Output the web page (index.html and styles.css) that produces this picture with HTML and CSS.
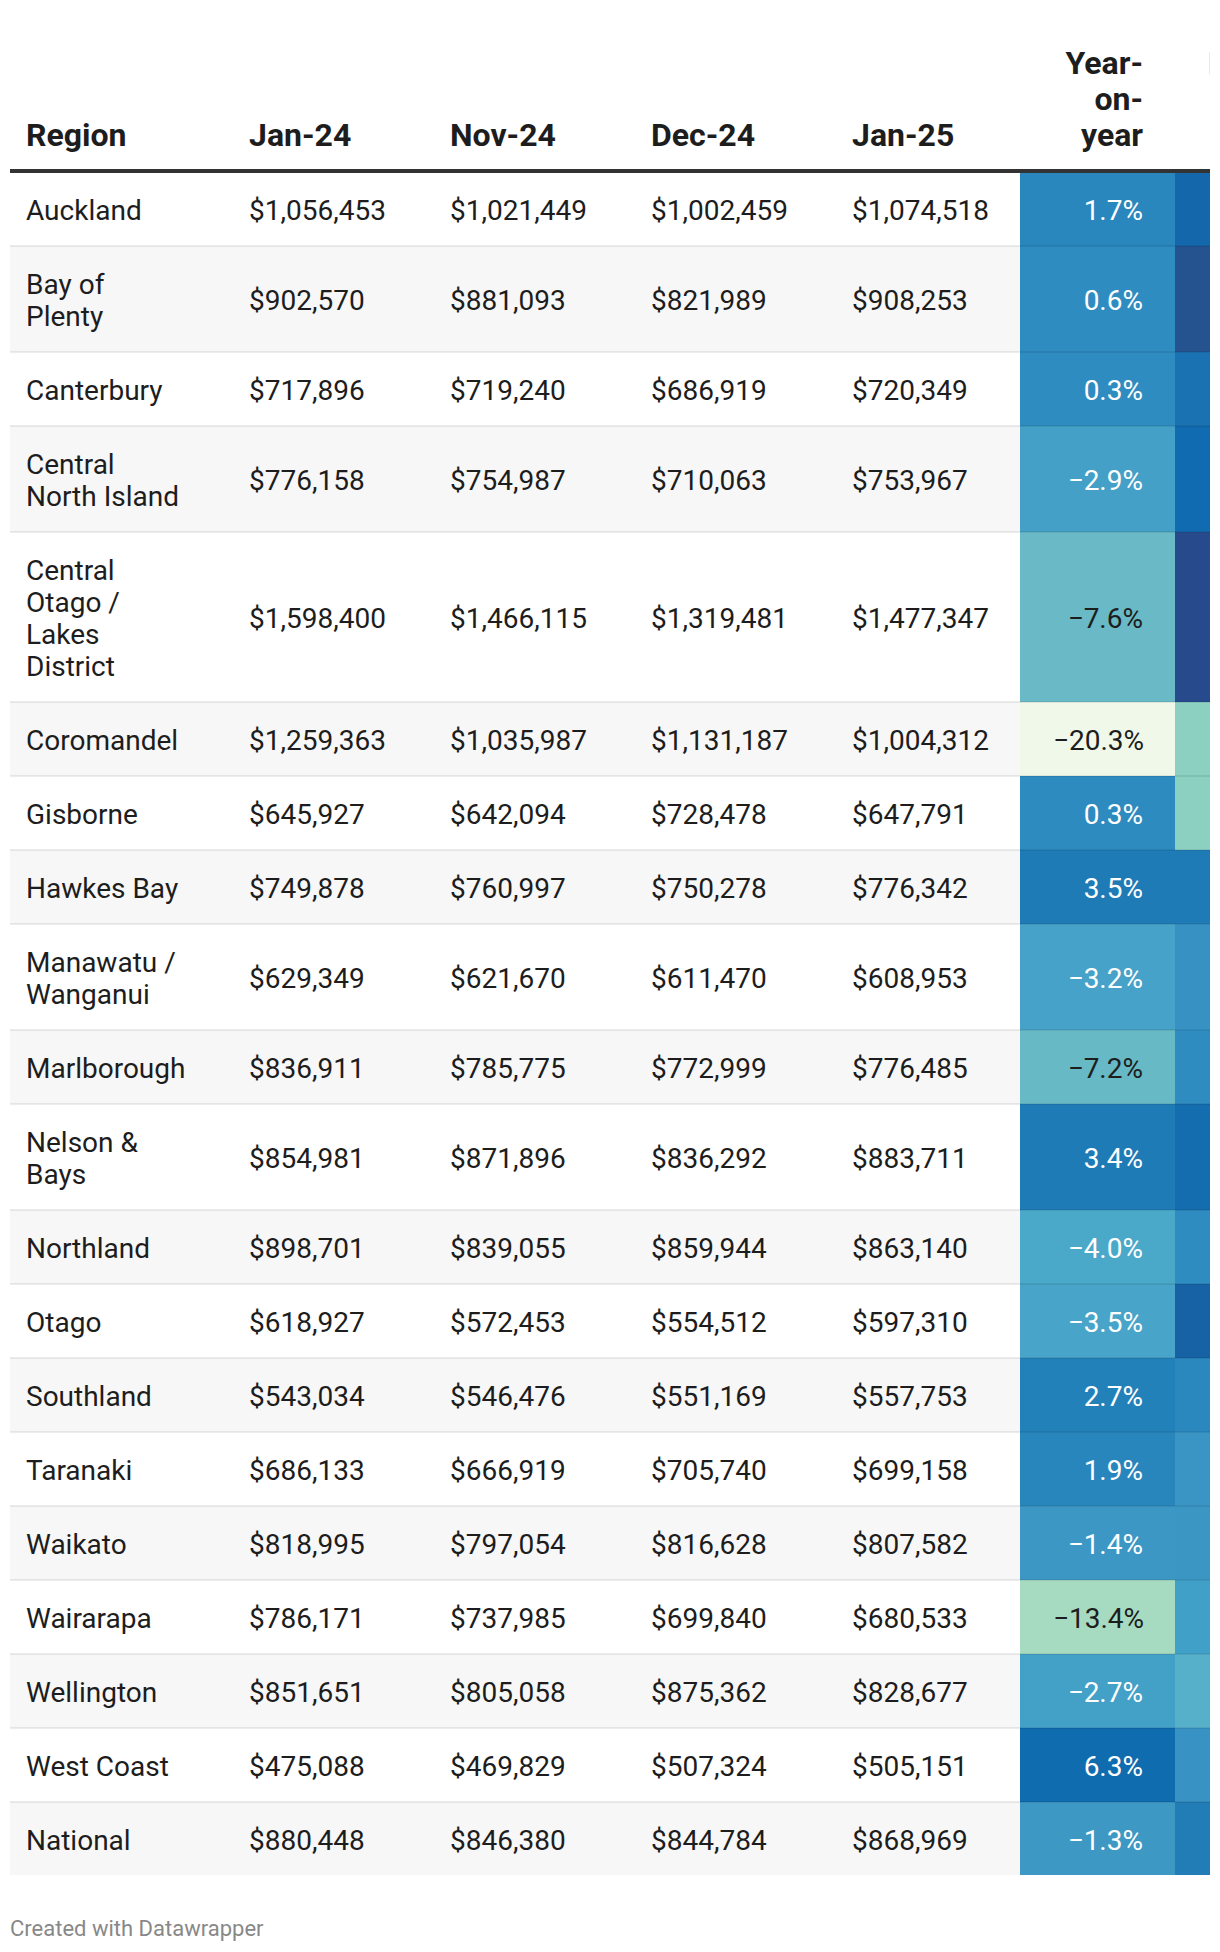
FILE: index.html
```html
<!DOCTYPE html>
<html lang="en">
<head>
<meta charset="utf-8">
<title>House prices by region</title>
<link rel="stylesheet" href="styles.css">
</head>
<body>
<div class="chart">
  <div class="table-wrap">
    <table class="dw-table">
      <colgroup>
        <col class="c-region"><col class="c-num"><col class="c-num"><col class="c-num"><col class="c-num"><col class="c-pct"><col class="c-pct">
      </colgroup>
      <thead>
        <tr>
          <th class="first">Region</th>
          <th>Jan-24</th>
          <th>Nov-24</th>
          <th>Dec-24</th>
          <th>Jan-25</th>
          <th class="right">Year-on-year</th>
          <th class="right next">Month-on-month</th>
        </tr>
      </thead>
      <tbody>
        <tr><td class="first">Auckland</td><td>$1,056,453</td><td>$1,021,449</td><td>$1,002,459</td><td>$1,074,518</td><td class="pct light" style="background:#2987bd">1.7%</td><td class="pct light" style="background:#1467ab"></td></tr>
        <tr><td class="first">Bay of Plenty</td><td>$902,570</td><td>$881,093</td><td>$821,989</td><td>$908,253</td><td class="pct light" style="background:#2e8cc0">0.6%</td><td class="pct light" style="background:#24538f"></td></tr>
        <tr><td class="first">Canterbury</td><td>$717,896</td><td>$719,240</td><td>$686,919</td><td>$720,349</td><td class="pct light" style="background:#2e8cc0">0.3%</td><td class="pct light" style="background:#1a72b2"></td></tr>
        <tr><td class="first">Central North Island</td><td>$776,158</td><td>$754,987</td><td>$710,063</td><td>$753,967</td><td class="pct light" style="background:#44a0c7">−2.9%</td><td class="pct light" style="background:#116bb0"></td></tr>
        <tr><td class="first">Central Otago / Lakes District</td><td>$1,598,400</td><td>$1,466,115</td><td>$1,319,481</td><td>$1,477,347</td><td class="pct" style="background:#69bac6">−7.6%</td><td class="pct light" style="background:#264a8b"></td></tr>
        <tr><td class="first">Coromandel</td><td>$1,259,363</td><td>$1,035,987</td><td>$1,131,187</td><td>$1,004,312</td><td class="pct" style="background:#eff8e9">−20.3%</td><td class="pct" style="background:#8bd0c1"></td></tr>
        <tr><td class="first">Gisborne</td><td>$645,927</td><td>$642,094</td><td>$728,478</td><td>$647,791</td><td class="pct light" style="background:#2d8bbf">0.3%</td><td class="pct" style="background:#8bd0c1"></td></tr>
        <tr><td class="first">Hawkes Bay</td><td>$749,878</td><td>$760,997</td><td>$750,278</td><td>$776,342</td><td class="pct light" style="background:#1f7bb6">3.5%</td><td class="pct light" style="background:#1f7bb6"></td></tr>
        <tr><td class="first">Manawatu / Wanganui</td><td>$629,349</td><td>$621,670</td><td>$611,470</td><td>$608,953</td><td class="pct light" style="background:#46a2c8">−3.2%</td><td class="pct light" style="background:#3792c3"></td></tr>
        <tr><td class="first">Marlborough</td><td>$836,911</td><td>$785,775</td><td>$772,999</td><td>$776,485</td><td class="pct" style="background:#66b9c5">−7.2%</td><td class="pct light" style="background:#2f8cc0"></td></tr>
        <tr><td class="first">Nelson &amp; Bays</td><td>$854,981</td><td>$871,896</td><td>$836,292</td><td>$883,711</td><td class="pct light" style="background:#1f7bb6">3.4%</td><td class="pct light" style="background:#146dae"></td></tr>
        <tr><td class="first">Northland</td><td>$898,701</td><td>$839,055</td><td>$859,944</td><td>$863,140</td><td class="pct light" style="background:#4aa8c9">−4.0%</td><td class="pct light" style="background:#2f8cc0"></td></tr>
        <tr><td class="first">Otago</td><td>$618,927</td><td>$572,453</td><td>$554,512</td><td>$597,310</td><td class="pct light" style="background:#48a4c8">−3.5%</td><td class="pct light" style="background:#1762a5"></td></tr>
        <tr><td class="first">Southland</td><td>$543,034</td><td>$546,476</td><td>$551,169</td><td>$557,753</td><td class="pct light" style="background:#2381ba">2.7%</td><td class="pct light" style="background:#2a88bf"></td></tr>
        <tr><td class="first">Taranaki</td><td>$686,133</td><td>$666,919</td><td>$705,740</td><td>$699,158</td><td class="pct light" style="background:#2886bd">1.9%</td><td class="pct light" style="background:#3a94c4"></td></tr>
        <tr><td class="first">Waikato</td><td>$818,995</td><td>$797,054</td><td>$816,628</td><td>$807,582</td><td class="pct light" style="background:#3c97c4">−1.4%</td><td class="pct light" style="background:#3c96c4"></td></tr>
        <tr><td class="first">Wairarapa</td><td>$786,171</td><td>$737,985</td><td>$699,840</td><td>$680,533</td><td class="pct" style="background:#a6dbc1">−13.4%</td><td class="pct light" style="background:#40a0c8"></td></tr>
        <tr><td class="first">Wellington</td><td>$851,651</td><td>$805,058</td><td>$875,362</td><td>$828,677</td><td class="pct light" style="background:#43a0c7">−2.7%</td><td class="pct light" style="background:#57b0ca"></td></tr>
        <tr><td class="first">West Coast</td><td>$475,088</td><td>$469,829</td><td>$507,324</td><td>$505,151</td><td class="pct light" style="background:#0f6caf">6.3%</td><td class="pct light" style="background:#3892c3"></td></tr>
        <tr class="last"><td class="first">National</td><td>$880,448</td><td>$846,380</td><td>$844,784</td><td>$868,969</td><td class="pct light" style="background:#3d98c4">−1.3%</td><td class="pct light" style="background:#227db7"></td></tr>
      </tbody>
    </table>
  </div>
  <div class="footer">Created with Datawrapper</div>
</div>
</body>
</html>
```
FILE: styles.css
```css
html, body {
  margin: 0;
  padding: 0;
  background: #ffffff;
}

body {
  font-family: Roboto, "Liberation Sans", Arial, sans-serif;
  color: #1d1d1d;
}

.chart {
  padding: 29px 10px 0 10px;
}

.table-wrap {
  width: 1200px;
  overflow: hidden;
}

.dw-table {
  border-collapse: collapse;
  table-layout: fixed;
  width: 1320px;
}

.c-region { width: 206px; }
.c-num { width: 201px; }
.c-pct { width: 155px; }

.dw-table th {
  font-size: 32px;
  line-height: 36px;
  font-weight: 700;
  color: #1d1d1d;
  text-align: left;
  vertical-align: bottom;
  padding: 16px 32px 16px 33px;
  border-bottom: 4px solid #333333;
}

.dw-table th.first,
.dw-table td.first {
  padding-left: 16px;
}

.dw-table th.right {
  text-align: right;
}

.dw-table th.next {
  padding-right: 27px;
}

.dw-table td {
  font-size: 28px;
  line-height: 32px;
  font-weight: 400;
  padding: 22px 32px 18px 33px;
  vertical-align: middle;
  border-bottom: 2px solid rgba(0, 0, 0, 0.075);
  white-space: normal;
}

.dw-table tbody tr:nth-child(even) {
  background: #f7f7f7;
}

.dw-table tr.last td {
  border-bottom: none;
}

.dw-table td.pct {
  text-align: right;
  color: #1d1d1d;
}

.dw-table td.pct.light {
  color: #ffffff;
}

.footer {
  margin-top: 42px;
  font-size: 22px;
  line-height: 24px;
  color: #888888;
}
```
